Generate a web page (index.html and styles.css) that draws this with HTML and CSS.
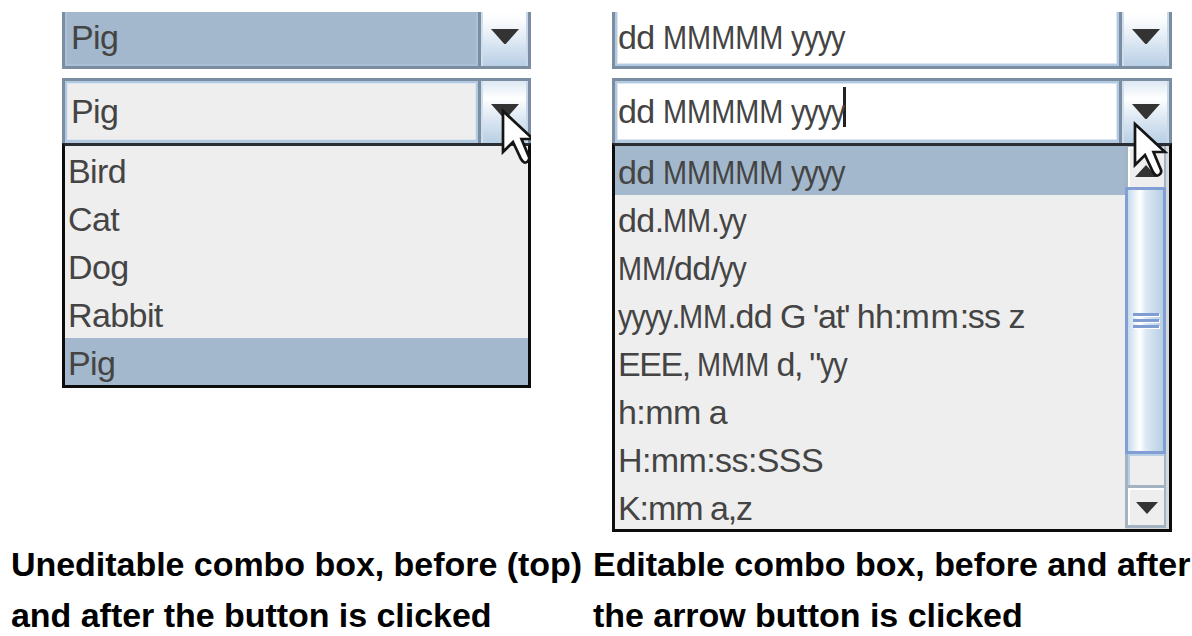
FILE: index.html
```
<!DOCTYPE html>
<html lang="en">
<head>
<meta charset="utf-8">
<title>Combo boxes</title>
<link rel="stylesheet" href="styles.css">
</head>
<body>
<main class="examples">
  <figure class="example">
    <div class="demo demo-left">
      <div class="combo cropped">
        <div class="field selected">Pig</div>
        <div class="button"><svg class="arrow" viewBox="0 0 28 15"><path d="M0 0H28L14.7 15H13.3Z"/></svg></div>
      </div>
      <div class="combo open">
        <div class="field plain">Pig</div>
        <div class="button"><svg class="arrow" viewBox="0 0 28 15"><path d="M0 0H28L14.7 15H13.3Z"/></svg></div>
      </div>
      <div class="popup">
        <ul class="list">
          <li>Bird</li>
          <li>Cat</li>
          <li>Dog</li>
          <li>Rabbit</li>
          <li class="selected">Pig</li>
        </ul>
      </div>
      <svg class="cursor cursor-left" viewBox="0 0 36 60" preserveAspectRatio="xMinYMin slice"><path d="M2 3V44L12 34L20 51Q23 56 26 54Q29 52 28 49L20.5 31H32Z"/></svg>
    </div>
    <figcaption>Uneditable combo box, before (top)<br>and after the button is clicked</figcaption>
  </figure>
  <figure class="example">
    <div class="demo demo-right">
      <div class="combo cropped">
        <div class="field editable">dd <span class="M w5">MMMMM</span> <span class="y w4">yyyy</span></div>
        <div class="button"><svg class="arrow" viewBox="0 0 28 15"><path d="M0 0H28L14.7 15H13.3Z"/></svg></div>
      </div>
      <div class="combo open">
        <div class="field editable">dd <span class="M w5">MMMMM</span> <span class="y w4">yyyy</span><span class="caret"></span></div>
        <div class="button"><svg class="arrow" viewBox="0 0 28 15"><path d="M0 0H28L14.7 15H13.3Z"/></svg></div>
      </div>
      <div class="popup">
        <ul class="list">
          <li class="selected">dd <span class="M w5">MMMMM</span> <span class="y w4">yyyy</span></li>
          <li>dd<span class="dot">.</span><span class="M w2">MM</span><span class="dot">.</span><span class="y w2">yy</span></li>
          <li><span class="M w2">MM</span><span class="dot">/</span>dd<span class="dot">/</span><span class="y w2">yy</span></li>
          <li><span class="y w4">yyyy</span><span class="dot">.</span><span class="M w2">MM</span><span class="dot">.</span>dd <span class="quoted">G 'at' </span>hh<span class="dot">:</span><span class="m">mm</span><span class="dot">:</span>ss z</li>
          <li><span class="dot">EEE, </span><span class="M w3">MMM</span><span class="dot"> d, "</span><span class="y w2">yy</span></li>
          <li>h:mm a</li>
          <li>H:mm:ss:SSS</li>
          <li><span class="tight">K:mm a,z</span></li>
        </ul>
        <div class="scrollbar">
          <div class="step up"><svg class="small-arrow" viewBox="0 0 22 12"><path d="M0 12H22L11 0Z"/></svg></div>
          <div class="thumb"><i></i><i></i><i></i></div>
          <div class="track"></div>
          <div class="step down"><svg class="small-arrow" viewBox="0 0 22 12"><path d="M0 0H22L11 12Z"/></svg></div>
        </div>
      </div>
      <svg class="cursor cursor-right" viewBox="0 0 36 60"><path d="M2 3V44L12 34L20 51Q23 56 26 54Q29 52 28 49L20.5 31H32Z"/></svg>
    </div>
    <figcaption>Editable combo box, before and after<br>the arrow button is clicked</figcaption>
  </figure>
</main>
</body>
</html>
```
FILE: styles.css
```
* { box-sizing: border-box; }

body {
  margin: 0;
  background: #fff;
  color: #444;
  font: 34px "Liberation Sans", Arial, sans-serif;
  overflow: hidden;
}

.examples {
  display: grid;
  grid-template-columns: 582px 610px;
  height: 636px;
  padding-top: 12px;
}

.example {
  display: grid;
  grid-template-rows: 527px auto;
  margin: 0;
}

.demo {
  position: relative;
  letter-spacing: -.6px;
  word-spacing: -.8px;
}

.demo-left { width: 469px; margin-left: 62px; }
.demo-right { width: 560px; margin-left: 30px; }

.combo {
  display: flex;
  border: 3px solid #7a8da1;
  background: #7a8da1;
}

.cropped { height: 57px; margin-bottom: 9px; border-top: 0; }
.open { height: 65px; border-bottom: 0; }

.field {
  flex: 1;
  padding-left: 4px;
  border: 2px solid #b2cae1;
  box-shadow: inset 0 0 0 1px #dbe6f1;
  line-height: 50px;
  white-space: pre;
}

.cropped .field { border-top: 0; }
.cropped .editable { box-shadow: inset 1px -1px #dbe6f1, inset -1px 0 #dbe6f1; }
.open .field { line-height: 56px; border-bottom-width: 3px; }
.field.selected, .list .selected { background: #a3b8cc; }
.cropped .field.selected { border-color: #a9c0d7; box-shadow: none; }
.field.plain { background: #eee; }
.field.editable { background: #fff; padding-left: 1px; }

.button {
  display: flex;
  justify-content: center;
  width: 47px;
  margin-left: 3px;
  border-left: 2px solid #cfdfee;
  border-right: 2px solid #c6d8ea;
  background: linear-gradient(#fff, #fbfcfe 15%, #dde8f3 55%, #b8cfe5);
}

.open .button { background: linear-gradient(#dde8f3, #fff 28%, #dde8f3 60%, #b8cfe5); }

.arrow { width: 28px; height: 15px; margin-top: 17px; fill: #333; }
.open .arrow { margin-top: 23px; }

.caret {
  display: inline-block;
  width: 3px;
  height: 40px;
  background: #222;
  vertical-align: 4px;
  margin: -8px 0 -8px -1px;
}

.popup {
  display: flex;
  overflow: hidden;
  border: 3px solid #0c0c0c;
  border-top-color: #2a2e33;
  background: #eee;
}

.list {
  flex: 1;
  margin: 0;
  padding: 1px 0 0;
  list-style: none;
  background: #eee;
}

.list .selected:first-child { box-shadow: 0 -1px #a3b8cc; }

.list li {
  height: 48px;
  padding-left: 3px;
  line-height: 50px;
  white-space: pre;
}

.demo-left .popup { height: 245px; }
.demo-left .list { padding-top: 0; }
.demo-right .popup { height: 389px; }

/* Condensed runs: the box holds the advance width, the glyphs are narrowed into it. */
.M, .y {
  display: inline-block;
  transform: scaleX(.85);
  transform-origin: 0 50%;
  line-height: 1;
}

.M { letter-spacing: 0; }
.y { letter-spacing: -1.3px; }
.M.w5 { width: 120px; }
.M.w3 { width: 72px; }
.M.w2 { width: 48px; }
.y.w4 { width: 53.3px; }
.y.w2 { width: 26.7px; }
.m { letter-spacing: .8px; }
.dot { letter-spacing: -1.4px; }
.tight { letter-spacing: -1.1px; }
.quoted { letter-spacing: -1.2px; }

.scrollbar {
  display: flex;
  flex-direction: column;
  width: 44px;
  padding-right: 3px;
  background: #d4d9dd;
}

.step {
  display: flex;
  justify-content: center;
  align-items: center;
  border: 3px solid #a3b3c1;
  border-right-width: 2px;
  background: #eee;
  box-shadow: inset 2px 2px #fff;
}

.up { height: 41px; border-top-width: 1px; border-bottom: 0; }
.down { height: 43px; }
.small-arrow { width: 22px; height: 12px; fill: #333; }
.up .small-arrow { margin-top: 8px; }
.down .small-arrow { margin: 2px 0 0 2px; }

.thumb {
  display: flex;
  flex-direction: column;
  justify-content: center;
  align-items: center;
  gap: 3px;
  height: 267px;
  border: 3px solid #819fd5;
  background: linear-gradient(90deg, #c8dced, #fff 34%, #dce8f3 52%, #b8cfe5);
}

.thumb i { width: 26px; height: 3px; background: #7f9cd3; box-shadow: 1px 1px #fff; }

.track {
  height: 31px;
  border-left: 3px solid #a3b3c1;
  border-right: 2px solid #a3b3c1;
  background: #eee;
  box-shadow: inset 2px 2px #b8cfe5;
}

.cursor {
  position: absolute;
  width: 36px;
  height: 60px;
  fill: #fff;
  stroke: #151515;
  stroke-width: 2.7;
}

.cursor-left { left: 439px; top: 96px; width: 30px; overflow: hidden; }
.cursor-right { left: 521px; top: 109px; }

figcaption {
  padding-left: 11px;
  color: #000;
  font-weight: bold;
  letter-spacing: -.04px;
  line-height: 51px;
  white-space: nowrap;
}
```
